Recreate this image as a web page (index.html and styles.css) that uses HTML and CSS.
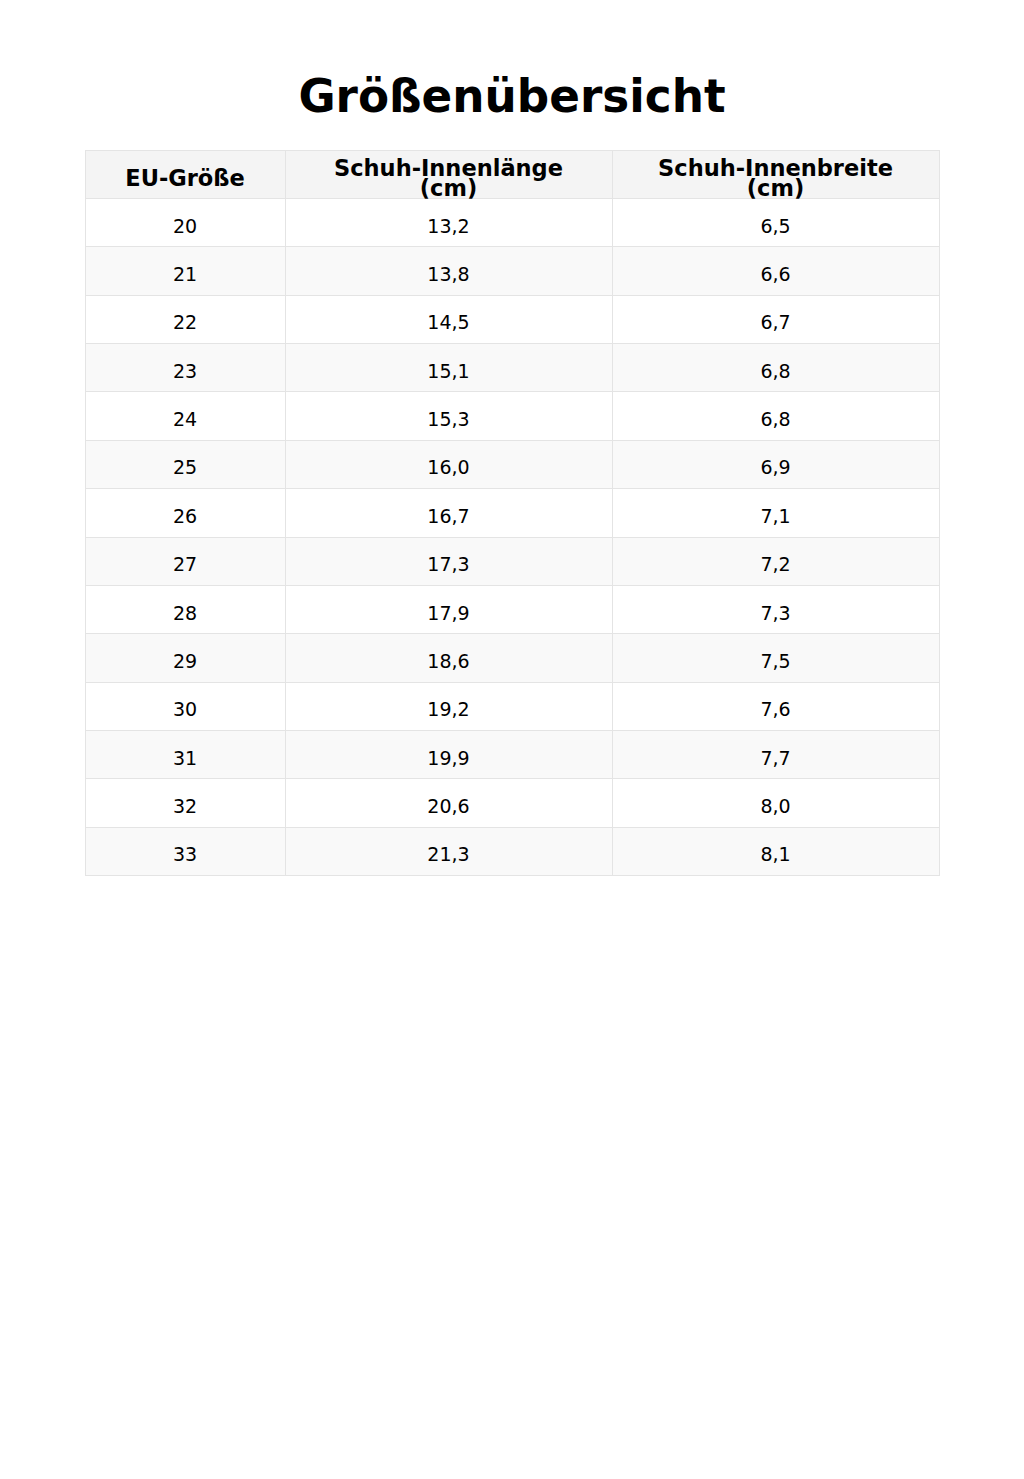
FILE: index.html
```html
<!DOCTYPE html>
<html lang="de">
<head>
<meta charset="utf-8">
<title>Größenübersicht</title>
<link rel="stylesheet" href="styles.css">
</head>
<body>
<main class="page">
  <h1 class="title">Größenübersicht</h1>
  <table class="sizes">
    <colgroup>
      <col class="c1"><col class="c2"><col class="c3">
    </colgroup>
    <thead>
      <tr><th>EU-Größe</th><th>Schuh-Innenlänge (cm)</th><th>Schuh-Innenbreite (cm)</th></tr>
    </thead>
    <tbody>
      <tr><td>20</td><td>13,2</td><td>6,5</td></tr>
      <tr><td>21</td><td>13,8</td><td>6,6</td></tr>
      <tr><td>22</td><td>14,5</td><td>6,7</td></tr>
      <tr><td>23</td><td>15,1</td><td>6,8</td></tr>
      <tr><td>24</td><td>15,3</td><td>6,8</td></tr>
      <tr><td>25</td><td>16,0</td><td>6,9</td></tr>
      <tr><td>26</td><td>16,7</td><td>7,1</td></tr>
      <tr><td>27</td><td>17,3</td><td>7,2</td></tr>
      <tr><td>28</td><td>17,9</td><td>7,3</td></tr>
      <tr><td>29</td><td>18,6</td><td>7,5</td></tr>
      <tr><td>30</td><td>19,2</td><td>7,6</td></tr>
      <tr><td>31</td><td>19,9</td><td>7,7</td></tr>
      <tr><td>32</td><td>20,6</td><td>8,0</td></tr>
      <tr><td>33</td><td>21,3</td><td>8,1</td></tr>
    </tbody>
  </table>
</main>
</body>
</html>
```
FILE: styles.css
```css
html, body {
  margin: 0;
  padding: 0;
  background: #ffffff;
}
body {
  font-family: "DejaVu Sans", "Liberation Sans", sans-serif;
  color: #000;
}
.page {
  padding-top: 71px;
}
.title {
  margin: 0 0 27px 0;
  font-size: 45.3px;
  font-weight: bold;
  text-align: center;
  line-height: 52px;
}
.sizes {
  width: 854px;
  margin: 0 auto;
  border-collapse: collapse;
  table-layout: fixed;
}
.c1 { width: 200px; }
.c2 { width: 327px; }
.c3 { width: 327px; }
.sizes th,
.sizes td {
  border: 1px solid #e4e4e4;
  text-align: center;
  vertical-align: middle;
}
.sizes th {
  height: 41px;
  padding: 6px 24px 0 24px;
  background: #f4f4f4;
  font-size: 22.5px;
  font-weight: bold;
  line-height: 20px;
}
.sizes td {
  height: 41.36px;
  padding: 6px 8px 0 8px;
  font-size: 19px;
  line-height: 22px;
}
.sizes tbody tr:nth-child(even) td {
  background: #f9f9f9;
}
```
